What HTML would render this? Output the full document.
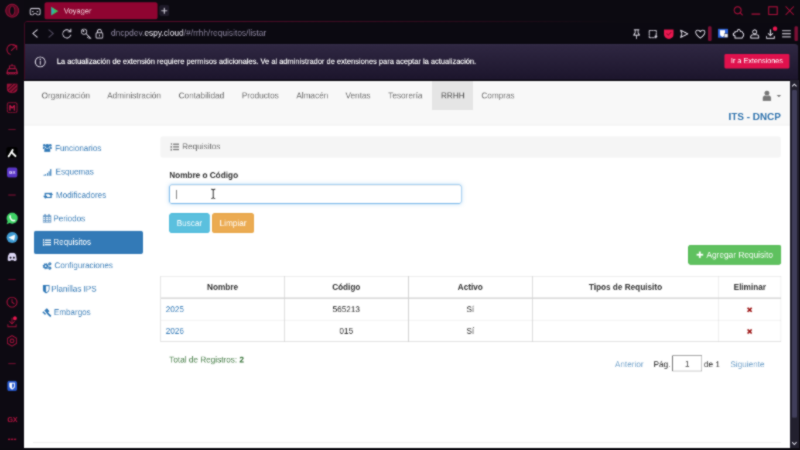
<!DOCTYPE html>
<html lang="es">
<head>
<meta charset="utf-8">
<title>Voyager</title>
<style>
*{box-sizing:border-box;}
html,body{margin:0;padding:0;width:800px;height:450px;overflow:hidden;background:#0c0a11;}
body{font-family:"Liberation Sans",Arial,sans-serif;}
#root{will-change:transform;position:absolute;left:0;top:0;width:1366px;height:768px;transform:scale(0.58565);transform-origin:0 0;background:#0c0a11;overflow:hidden;font-size:14px;line-height:20px;color:#333;}
/* ---------- browser chrome ---------- */
#side{position:absolute;left:0;top:0;width:41px;height:768px;background:#0d0a12;}
#chrome{position:absolute;left:0;top:0;width:1366px;height:138px;}
#tab{position:absolute;left:76px;top:4px;width:193px;height:29px;background:#8f0431;border-radius:4px;color:#f3dbe1;font-size:12.900px;line-height:29px;}
#tab span{position:absolute;left:33px;top:0;}
#newtab{position:absolute;left:272px;top:9px;width:17px;height:18px;background:#1e1a28;border-radius:3px;}
#frameline{position:absolute;left:41px;top:36px;width:1325px;height:1.5px;background:linear-gradient(90deg,#6a0c30 0,#5a0a2a 25%,rgba(90,10,42,0.5) 45%,rgba(90,10,42,0) 70%);}
#frameleft{position:absolute;left:41.5px;top:36px;width:1.5px;height:100px;background:#4e0a26;}
#frame{z-index:3;pointer-events:none;position:absolute;left:41px;top:36px;width:1325px;height:100px;border-top:1.500px solid #6a0c30;border-left:1.500px solid #5c0b2a;border-top-left-radius:6px;}
#framefade{z-index:4;position:absolute;left:341px;top:35px;width:1025px;height:4px;background:linear-gradient(90deg,rgba(12,10,17,0) 0,rgba(12,10,17,0.6) 45%,#0c0a11 70%);}
#addr{position:absolute;left:42px;top:37px;width:1324px;height:38px;background:#0b0911;}
#url{position:absolute;left:147.5px;top:9px;font-size:14.3px;line-height:20px;color:#8d86a0;white-space:nowrap;}
#url b{font-weight:normal;color:#e9e6f0;}
#info{position:absolute;left:43px;top:75px;width:1320px;height:61px;background:linear-gradient(#2f2742,#1c152c);border-radius:0 6px 0 0;border-top:1px solid #38304d;}
#infotext{position:absolute;left:54px;top:19px;font-size:12.77px;line-height:20px;color:#fff;white-space:nowrap;-webkit-text-stroke:0.3px #fff;}
#extbtn{position:absolute;left:1194px;top:16px;width:111px;height:25px;background:#e0114d;border-radius:3px;color:#fff;font-size:12.4px;line-height:25px;text-align:center;}
#infobottom{position:absolute;left:43px;top:136px;width:1323px;height:2px;background:#08060c;}
#scroll{position:absolute;left:1348.500px;top:137px;width:15px;height:628px;background:#22202e;}
#thumb{position:absolute;left:3px;top:17px;width:9px;height:559px;background:#403e5a;border-radius:2px;}
#bottombar{position:absolute;left:0;top:765px;width:1366px;height:3px;background:#0c0a11;}
/* ---------- page ---------- */
#page{position:absolute;left:41px;top:137.500px;width:1307.500px;height:628px;background:#fff;overflow:hidden;}
#navbar{position:absolute;left:0;top:0;width:1308px;height:76px;background:#f8f8f8;border-bottom:1.500px solid #dadada;}
#navbar a{position:absolute;top:0;height:50px;line-height:20px;padding:15px 15px;color:#6c6c6c;white-space:nowrap;}
#navbar a.act{background:#e5e5e5;color:#505050;}
#brand{position:absolute;left:1203px;top:52.5px;font-size:16.9px;font-weight:bold;color:#2e72ad;line-height:20px;white-space:nowrap;}
#leftnav div{position:absolute;left:17px;width:186px;height:40px;line-height:20px;padding:10px 15px;color:#337ab7;white-space:nowrap;border-radius:4px;}
#leftnav div.act{background:#337ab7;color:#fff;}
#leftnav svg{position:absolute;left:15px;top:13px;height:14px;overflow:visible;}
#leftnav span{position:absolute;top:10px;font-size:13.800px;color:#3f80b9;}
#leftnav div.act span{color:#fff;}
#crumb{position:absolute;left:233px;top:95px;width:1059px;height:36px;background:#f5f5f5;border-radius:4px;padding:8px 15px;color:#6c6c6c;}
#crumb svg{position:absolute;left:16.500px;top:10px;}
#crumb span{position:absolute;left:37px;top:7.500px;}
#lbl{position:absolute;left:248px;top:151px;font-weight:bold;color:#333;}
#inp{position:absolute;left:248px;top:177px;width:499px;height:33.500px;border:1px solid #7bb8ea;border-radius:4px;box-shadow:inset 0 1px 1px rgba(0,0,0,.075),0 0 7px rgba(102,175,233,.5);background:#fff;}
#caret{position:absolute;left:260px;top:186px;width:1px;height:16px;background:#777;}
.btn{position:absolute;height:34px;border-radius:4px;color:#fff;text-align:center;line-height:32px;border:1px solid transparent;white-space:nowrap;}
#tbl{position:absolute;left:233px;top:333.200px;width:1059px;border-collapse:collapse;table-layout:fixed;}
#tbl th,#tbl td{border:1px solid #d2d2d2;padding:8px;line-height:20px;text-align:center;height:37px;}
#tbl th{font-weight:bold;color:#333;border-bottom-width:2px;}
#tbl td.l{text-align:left;color:#337ab7;}
#tbl td svg{vertical-align:-1px;}
#total{position:absolute;left:248px;top:466px;color:#3c763d;white-space:nowrap;}
#pager span{position:absolute;top:474px;white-space:nowrap;}
#pager .lk{color:#6fa0c9;}
#pginp{position:absolute;left:1107px;top:469px;width:51px;height:27px;border:1.5px solid #555;background:#fff;text-align:center;line-height:26px;color:#333;}
#hr{position:absolute;left:15px;top:617px;width:1278px;height:1px;background:#eee;}
</style>
</head>
<body>
<svg width="0" height="0" style="position:absolute"><filter id="bl" x="0" y="0" width="100%" height="100%" color-interpolation-filters="sRGB"><feConvolveMatrix order="3" kernelMatrix="1 2 1 2 10 2 1 2 1" divisor="22" edgeMode="duplicate" preserveAlpha="true"/></filter></svg><div id="wrap" style="position:absolute;left:0;top:0;width:800px;height:450px;overflow:hidden;filter:url(#bl)"><div id="root">
  <div id="side">
  <svg width="41" height="768" viewBox="0 0 41 768" fill="none" stroke="#a0113a" stroke-width="1.700" stroke-linecap="round" stroke-linejoin="round">
    <!-- opera logo -->
    <path d="M20.800 7.200 A11 11 0 1 0 20.800 29.200 A11 11 0 1 0 20.800 7.200 Z M20.800 10.200 A4.500 8 0 1 1 20.800 26.200 A4.500 8 0 1 1 20.800 10.200 Z" fill="#560a23" fill-rule="evenodd" stroke="#97113a" stroke-width="1.400"/>
    <!-- speed dial -->
    <path d="M17.5 92.800 A8.800 8.800 0 1 1 28.500 80.500"/><path d="M19.500 86 L27.500 79"/><path d="M28.500 84.500 L28.500 78 L22 78" />
    <!-- cleaner -->
    <path d="M20.500 109.500 V112 M16 112.500 H25.500 V117 H16 Z M14 117.500 H27.500 L29.500 124 H12 Z M12 125.500 Q14.500 127.500 16.500 125.500 Q18.500 127.500 20.500 125.500 Q22.500 127.500 24.500 125.500 Q26.500 127.500 29.500 125.500" stroke="#b81545"/>
    <!-- shield hatch -->
    <path d="M12.500 143.500 H29 V152 Q29 157 20.700 158.500 Q12.500 157 12.500 152 Z" fill="#8f1236" stroke-width="1.400"/><path d="M14 151 L21.500 144 M16 155 L27.500 144.500 M21 157 L28.500 150" stroke="#2a0713" stroke-width="1.500"/>
    <!-- M box -->
    <rect x="12.500" y="175.500" width="16.500" height="16.500" rx="2.500" stroke-dasharray="3 1.500" stroke-width="1.500"/>
    <path d="M17 188 V180 L20.700 184.500 L24.500 180 V188" stroke="#c8174a" stroke-width="2"/>
    <!-- separators -->
    <path d="M15 221 H26 M15 333 H26 M15 477 H26 M15 621 H26" stroke="#6a0e2e" stroke-width="1.800"/>
    <!-- aria -->
    <rect x="11" y="251" width="19" height="19" rx="4" fill="#000" stroke="none"/>
    <path d="M14.800 267 L21.500 256.300 M21.300 261.500 L26.500 266.500" stroke="#fff" stroke-width="3.200"/>
    <!-- purple app -->
    <rect x="12" y="286" width="17.500" height="17" rx="4" fill="#5a36c6" stroke="none"/>
    <!-- whatsapp -->
    <circle cx="20.8" cy="372.500" r="9.5" fill="#3fd366" stroke="none"/>
    <path d="M11.500 382.500 L13.500 376 L17.500 380.500 Z" fill="#3fd366" stroke="none"/>
    <path d="M17.500 368.500 Q17 373 20 375.500 Q22.500 377.500 25 376.500" stroke="#fff" stroke-width="2.6"/>
    <!-- telegram -->
    <circle cx="20.8" cy="405.500" r="9.5" fill="#3e9bd3" stroke="none"/>
    <path d="M14.500 405.500 L26 400.500 L24 411 L20 408 L18.500 410 L18 407 Z" fill="#fff" stroke="none"/>
    <!-- discord -->
    <path d="M13 444 Q13.500 435.500 16 432.500 Q18 431.500 20.500 432 Q23 431.500 25.500 432.500 Q28 435.500 28.500 444 Q26 446.500 24 446 L23 444 Q20.500 444.800 18.500 444 L17.500 446 Q15 446.500 13 444 Z" fill="#dcd6f5" stroke="none"/>
    <circle cx="18" cy="440" r="1.700" fill="#0d0a12" stroke="none"/><circle cx="23.600" cy="440" r="1.700" fill="#0d0a12" stroke="none"/>
    <!-- clock -->
    <circle cx="20.500" cy="516" r="8.500"/><path d="M20.500 511 V516 L24 518.500"/>
    <!-- downloads -->
    <path d="M20.500 543 V552 M16.500 549 L20.500 553 L24.500 549 M13.500 554 V558 H27.500 V554"/>
    <circle cx="25.500" cy="543.500" r="3.200" fill="#e8174f" stroke="none"/>
    <!-- settings -->
    <path d="M20.500 573 L28 577.500 V586.500 L20.500 591 L13 586.500 V577.500 Z"/><circle cx="20.500" cy="582" r="3.200"/>
    <!-- bitwarden -->
    <rect x="12.500" y="650.500" width="16.500" height="17" rx="3.500" fill="#2558cf" stroke="none"/>
    <path d="M16 653.500 H25.500 V659 Q25.500 663 20.750 665.200 Q16 663 16 659 Z" fill="#fff" stroke="none"/>
    <path d="M20.750 655 H24 V659 Q24 661.500 20.750 663.500 Z" fill="#2558cf" stroke="none"/>
    <!-- dots -->
    <path d="M15 750 h1.500 M20 750 h1.500 M25 750 h1.500" stroke-width="2.400"/>
  </svg>
  <div style="position:absolute;left:12px;top:288.500px;width:17.500px;text-align:center;font-size:8px;line-height:12px;font-weight:bold;color:#efe9ff;">GX</div>
  <div style="position:absolute;left:9px;top:710px;width:24px;text-align:center;font-size:12.500px;line-height:14px;font-weight:bold;color:#ad123d;letter-spacing:-0.500px;">GX</div>
  </div>

  <div id="chrome">
    <div id="tab"><span>Voyager</span></div>
    <div id="newtab"></div>
    <div id="frame"></div><div id="framefade"></div>
    <div id="addr">
      <div id="url">dncpdev.<b>espy.cloud</b>/#/rrhh/requisitos/listar</div>
    </div>
    <div id="info">
      <div id="infotext">La actualización de extensión requiere permisos adicionales. Ve al administrador de extensiones para aceptar la actualización.</div>
      <div id="extbtn">Ir a Extensiones</div>
    </div>
    <div id="infobottom"></div>
    <svg style="position:absolute;left:0;top:0" width="1366" height="138" viewBox="0 0 1366 138" fill="none" stroke="#e6e3ee" stroke-width="1.700" stroke-linecap="round" stroke-linejoin="round">
      <!-- workspace goggles -->
      <path d="M54.500 14.500 H65.500 Q68.500 14.500 68.500 17.500 V22.500 Q68.500 25.500 65.500 25.500 H64 L61.500 23 H58.500 L56 25.500 H54.500 Q51.500 25.500 51.500 22.500 V17.500 Q51.500 14.500 54.500 14.500 Z M55.500 19.800 h1.200 M63.300 19.800 h1.200" stroke="#cfcbd8"/>
      <!-- tab favicon -->
      <path d="M87.500 11.500 L99.500 19 L87.500 26.500 Z" fill="#3fbf5a" stroke="none"/>
      <path d="M87.500 11.500 L93 19 L87.500 26.500 Z" fill="#2aa5d8" stroke="none" opacity="0.7"/>
      <!-- new tab plus -->
      <path d="M280.500 14 V23 M276 18.500 H285" stroke-width="1.600"/>
      <!-- window controls -->
      <g stroke="#a30e38" stroke-width="1.800">
        <circle cx="1259.500" cy="17.500" r="6"/><path d="M1264 22 L1267.500 25.500"/>
        <path d="M1284 24 H1297.500"/>
        <rect x="1312.500" y="11.500" width="14.500" height="13.500"/>
        <path d="M1342 11.500 L1355 25 M1355 11.500 L1342 25"/>
      </g>
      <!-- nav: back fwd reload key lock -->
      <path d="M63.500 51 L56 57.200 L63.500 63.500" stroke-width="1.700" stroke="#d4d0dc"/>
      <path d="M83.500 51 L91 57.200 L83.500 63.500" stroke="#4a4458" stroke-width="1.900"/>
      <g stroke="#d4d0dc"><path d="M120 54 A7 7 0 1 0 120.800 60" stroke-width="1.600"/><path d="M121 49.500 V54.500 H116" stroke-width="1.600"/></g>
      <circle cx="143.500" cy="54" r="4.600" stroke-width="1.500" stroke="#d4d0dc"/><path d="M146.800 57.300 L155 65.500 M151.500 62 L149.500 64 M153.500 64 L152 65.500" stroke-width="1.500" stroke="#d4d0dc"/><circle cx="142.500" cy="53" r="0.800"/>
      <rect x="164" y="56" width="11.500" height="9" rx="1.500" stroke-width="1.500" stroke="#d4d0dc"/><path d="M166.500 56 V53.500 A3.200 3.200 0 0 1 173 53.500 V56" stroke-width="1.500" stroke="#d4d0dc"/><path d="M169.800 59.500 V61.500"/>
      <!-- toolbar right -->
      <path d="M1083 51 H1091 M1084.500 51 V56 L1082 60 H1092 L1089.500 56 V51 M1087 60 V66" stroke-width="1.600"/>
      <path d="M1108.500 52 H1120.500 V64.500 H1108.500 Z" stroke-dasharray="2.500 1.600" stroke-width="1.600"/><path d="M1118 62 h4 M1120 60 v4" stroke-width="1.300"/>
      <path d="M1134 50.500 H1150 V59 Q1150 65 1142 66.500 Q1134 65 1134 59 Z" fill="#e8174f" stroke="none"/><path d="M1138.500 57.500 L1141 60 L1146 55" stroke="#8a0a2c" stroke-width="1.500"/>
      <path d="M1162 51.500 L1174.500 57.700 L1162 64 L1164.500 57.700 Z" stroke-width="1.600"/>
      <path d="M1195.800 65 Q1188 59.500 1188 55 Q1188 51.500 1191.500 51.500 Q1194.500 51.500 1195.800 54.500 Q1197 51.500 1200 51.500 Q1203.600 51.500 1203.600 55 Q1203.600 59.500 1195.800 65 Z" stroke-width="1.600"/>
      <rect x="1209" y="45" width="6" height="25" rx="2" fill="#7a1035" stroke="none"/>
      <rect x="1226" y="49" width="17" height="15.500" rx="1" fill="#2d62d8" stroke="none"/>
      <path d="M1229 51.500 H1238 V57 Q1238 61 1233.500 63 Q1229 61 1229 57 Z" fill="#fff" stroke="none"/>
      <rect x="1236.500" y="57.500" width="6.500" height="6.500" rx="1" fill="#e9e9ee" stroke="#2a2a3a" stroke-width="0.800"/>
      <path d="M1255 65 V61 Q1252 61 1252 58.500 Q1252 56 1255 56 V54 H1259 Q1258.500 50.500 1261.500 50.500 Q1264.500 50.500 1264 54 H1267 L1270.500 59.500 L1267 65 Z" stroke-width="1.600"/>
      <circle cx="1288.700" cy="54.500" r="3.400" stroke-width="1.600"/><path d="M1282 65 V62.500 Q1282 59.500 1285.500 59.500 H1292 Q1295.500 59.500 1295.500 62.500 V65 Z" stroke-width="1.600"/>
      <path d="M1315.500 51 V60 M1311.500 57 L1315.500 61 L1319.500 57 M1309 62 V65.500 H1322 V62" stroke-width="1.600"/><circle cx="1323.500" cy="49" r="3.800" fill="#e8174f" stroke="none"/>
      <path d="M1336 52.500 H1349.500 M1336 57.700 H1349.500 M1336 63 H1349.500" stroke-width="1.700"/>
      <rect x="1356.500" y="45" width="6" height="25" rx="2" fill="#7a1035" stroke="none"/>
      <!-- info icon -->
      <circle cx="68.700" cy="105.700" r="8.500" stroke-width="1.500"/><path d="M68.700 104.500 V110" stroke-width="1.800"/><circle cx="68.700" cy="101.300" r="0.600" stroke-width="1.200"/>
    </svg>
  </div>

  <div id="page">
    <div id="navbar">
      <a style="left:15px">Organización</a>
      <a style="left:127px">Administración</a>
      <a style="left:249px">Contabilidad</a>
      <a style="left:357px">Productos</a>
      <a style="left:450px">Almacén</a>
      <a style="left:534px">Ventas</a>
      <a style="left:607px">Tesorería</a>
      <a class="act" style="left:697px">RRHH</a>
      <a style="left:766px">Compras</a>
      <svg style="position:absolute;left:1261px;top:16px" width="36" height="20" viewBox="0 0 36 20">
        <circle cx="7.500" cy="5" r="4.200" fill="#777"/><path d="M0.500 18 V13.500 Q0.500 9.500 4.500 9 Q7.500 11.500 10.500 9 Q14.500 9.500 14.500 13.500 V18 Z" fill="#777"/>
        <path d="M24 8 H32 L28 12 Z" fill="#777"/>
      </svg>
      <div id="brand">ITS - DNCP</div>
    </div>
    <div id="leftnav">
      <div style="top:96px"><svg width="15.500" viewBox="0 0 15 14" style="height:15px;top:11.500px"><g fill="#337ab7"><circle cx="7.500" cy="4" r="3.300"/><path d="M2.500 13.500 Q2.300 7.400 4.800 7.200 Q7.500 9 10.200 7.200 Q12.700 7.400 12.500 13.500 Z"/><circle cx="2.500" cy="2.800" r="2.200"/><circle cx="12.500" cy="2.800" r="2.200"/><path d="M0 8.800 Q-0.200 5.400 1.300 5.200 Q2.600 6 4 5.500 Q3.600 6.500 4 7 Q2.800 7.600 2.700 8.800 Z M15 8.800 Q15.200 5.400 13.700 5.200 Q12.400 6 11 5.500 Q11.400 6.500 11 7 Q12.200 7.600 12.300 8.800 Z"/></g></svg><span style="left:36px">Funcionarios</span></div>
      <div style="top:136px"><svg width="16" viewBox="0 0 16 14"><g fill="#337ab7"><rect x="1.500" y="11.300" width="1.700" height="1.700"/><rect x="4.300" y="10" width="1.700" height="3"/><rect x="7.100" y="8" width="1.700" height="5"/><rect x="9.900" y="5.500" width="1.700" height="7.500"/><rect x="12.700" y="2" width="1.900" height="11"/></g></svg><span style="left:37px">Esquemas</span></div>
      <div style="top:176px"><svg width="16.500" viewBox="0 0 15 14" style="height:15.400px;top:12px;left:15.500px"><g fill="none" stroke="#337ab7" stroke-width="2"><path d="M3 10.500 V4 H10.500 M12 3.500 V10 H4.500"/></g><g fill="#337ab7"><path d="M-0.300 7.800 H6.300 L3 12 Z M8.700 6.200 H15.300 L12 2 Z"/></g></svg><span style="left:37.500px">Modificadores</span></div>
      <div style="top:216px"><svg width="14.500" viewBox="0 0 13 14" style="height:15.500px;top:11.500px"><g fill="#5f93c3"><path d="M0 2.500 H13 V13.500 H0 Z M1 5 V7.200 H3.500 V5 Z M4.500 5 V7.200 H8.500 V5 Z M9.500 5 V7.200 H12 V5 Z M1 8.200 V10.200 H3.500 V8.200 Z M4.500 8.200 V10.200 H8.500 V8.200 Z M9.500 8.200 V10.200 H12 V8.200 Z M1 11.200 V12.500 H3.500 V11.200 Z M4.500 11.200 V12.500 H8.500 V11.200 Z M9.500 11.200 V12.500 H12 V11.200 Z" fill-rule="evenodd"/><rect x="2.500" y="0.500" width="2" height="3.500" rx="0.700"/><rect x="8.500" y="0.500" width="2" height="3.500" rx="0.700"/></g></svg><span style="left:33px">Periodos</span></div>
      <div class="act" style="top:256px"><svg width="14" viewBox="0 0 14 14"><g fill="#fff"><rect x="4" y="2" width="10" height="2"/><rect x="4" y="6" width="10" height="2"/><rect x="4" y="10" width="10" height="2"/><rect x="0.800" y="1" width="1.300" height="3.500"/><rect x="0.300" y="5.500" width="2.300" height="3"/><rect x="0.300" y="9.800" width="2.300" height="3"/></g></svg><span style="left:33px">Requisitos</span></div>
      <div style="top:296px"><svg width="15" viewBox="0 0 15 14"><g fill="none" stroke="#337ab7"><circle cx="5" cy="7.500" r="2.900" stroke-width="2.600"/><circle cx="5" cy="7.500" r="4.600" stroke-width="1.400" stroke-dasharray="1.800 1.800"/><circle cx="12" cy="3.500" r="1.500" stroke-width="1.700"/><circle cx="12" cy="3.500" r="2.500" stroke-width="1" stroke-dasharray="1 1"/><circle cx="12" cy="10.800" r="1.500" stroke-width="1.700"/><circle cx="12" cy="10.800" r="2.500" stroke-width="1" stroke-dasharray="1 1"/></g></svg><span style="left:35px">Configuraciones</span></div>
      <div style="top:336px"><svg width="11.500" viewBox="0 0 10 14" style="height:15px;top:12.500px" preserveAspectRatio="none"><path d="M0.600 1.500 H9.400 V7.500 Q9.400 11 5 13.200 Q0.600 11 0.600 7.500 Z" fill="none" stroke="#337ab7" stroke-width="1.200"/><path d="M5 1.500 H0.600 V7.500 Q0.600 11 5 13.200 Z" fill="#337ab7"/></svg><span style="left:29.500px">Planillas IPS</span></div>
      <div style="top:376px"><svg width="16" viewBox="0 0 14 14" style="height:16px;top:12px;left:14px"><g fill="#337ab7"><path d="M3.200 3.800 L7 0.300 L11 4.500 L7.300 8 Z"/><path d="M8.300 6 L13.800 11.500 L12 13.500 L6.500 8 Z"/><path d="M0.300 6.300 L1.800 4.800 L5.800 8.800 L4.300 10.300 Z"/></g></svg><span style="left:34px">Embargos</span></div>
    </div>
    <div id="crumb"><svg width="15" height="15.500" viewBox="0 0 14 14" preserveAspectRatio="none"><g fill="#777"><rect x="4" y="2" width="10" height="2"/><rect x="4" y="6" width="10" height="2"/><rect x="4" y="10" width="10" height="2"/><rect x="0.800" y="1" width="1.300" height="3.500"/><rect x="0.300" y="5.500" width="2.300" height="3"/><rect x="0.300" y="9.800" width="2.300" height="3"/></g></svg><span>Requisitos</span></div>
    <div id="lbl">Nombre o Código</div>
    <div id="inp"></div>
    <div id="caret"></div>
    <svg style="position:absolute;left:318px;top:184px" width="10" height="18" viewBox="0 0 10 18" fill="none" stroke="#222" stroke-width="1.400"><path d="M1.500 1 Q4 1 5 2.500 Q6 1 8.500 1 M5 2.500 V15.500 M1.500 17 Q4 17 5 15.500 Q6 17 8.500 17"/></svg>
    <div class="btn" style="left:248px;top:226px;width:69px;background:#5bc0de;border-color:#46b8da;">Buscar</div>
    <div class="btn" style="left:321px;top:226px;width:72px;background:#ebab52;border-color:#e5a23f;">Limpiar</div>
    <div class="btn" style="left:1134px;top:280px;width:159px;background:#5fc15f;border-color:#55b855;font-size:14.2px;"><svg width="12" height="12" viewBox="0 0 12 12" style="vertical-align:-1px;margin-right:5px"><path d="M4.500 0.500 H7.500 V4.500 H11.500 V7.500 H7.500 V11.500 H4.500 V7.500 H0.500 V4.500 H4.500 Z" fill="#fff"/></svg>Agregar Requisito</div>
    <table id="tbl">
      <colgroup><col style="width:211px"><col style="width:211.500px"><col style="width:212px"><col style="width:318px"><col style="width:106.500px"></colgroup>
      <tr><th>Nombre</th><th>Código</th><th>Activo</th><th>Tipos de Requisito</th><th>Eliminar</th></tr>
      <tr><td class="l">2025</td><td>565213</td><td>Sí</td><td></td><td><svg width="10" height="10" viewBox="0 0 10 10"><path d="M1.500 1.500 L8.500 8.500 M8.500 1.500 L1.500 8.500" stroke="#a01c1c" stroke-width="2.800"/></svg></td></tr>
      <tr><td class="l">2026</td><td>015</td><td>Sí</td><td></td><td><svg width="10" height="10" viewBox="0 0 10 10"><path d="M1.500 1.500 L8.500 8.500 M8.500 1.500 L1.500 8.500" stroke="#a01c1c" stroke-width="2.800"/></svg></td></tr>
    </table>
    <div id="total">Total de Registros: <b>2</b></div>
    <div id="pager">
      <span class="lk" style="left:1009px">Anterior</span>
      <span style="left:1075px">Pág.</span>
      <div id="pginp">1</div>
      <span style="left:1161px">de 1</span>
      <span class="lk" style="left:1206px">Siguiente</span>
    </div>
    <div id="hr"></div>
  </div>
  <div id="scroll">
    <div id="thumb"></div>
    <svg style="position:absolute;left:0;top:0" width="14" height="628" viewBox="0 0 14 628" fill="none" stroke="#e0dfea" stroke-width="1.800"><path d="M3.500 10.500 L7.300 6.700 L11.100 10.500 M3.500 618 L7.300 622 L11.100 618"/></svg>
  </div>
  <div id="bottombar"></div>
</div>
</div></body>
</html>
